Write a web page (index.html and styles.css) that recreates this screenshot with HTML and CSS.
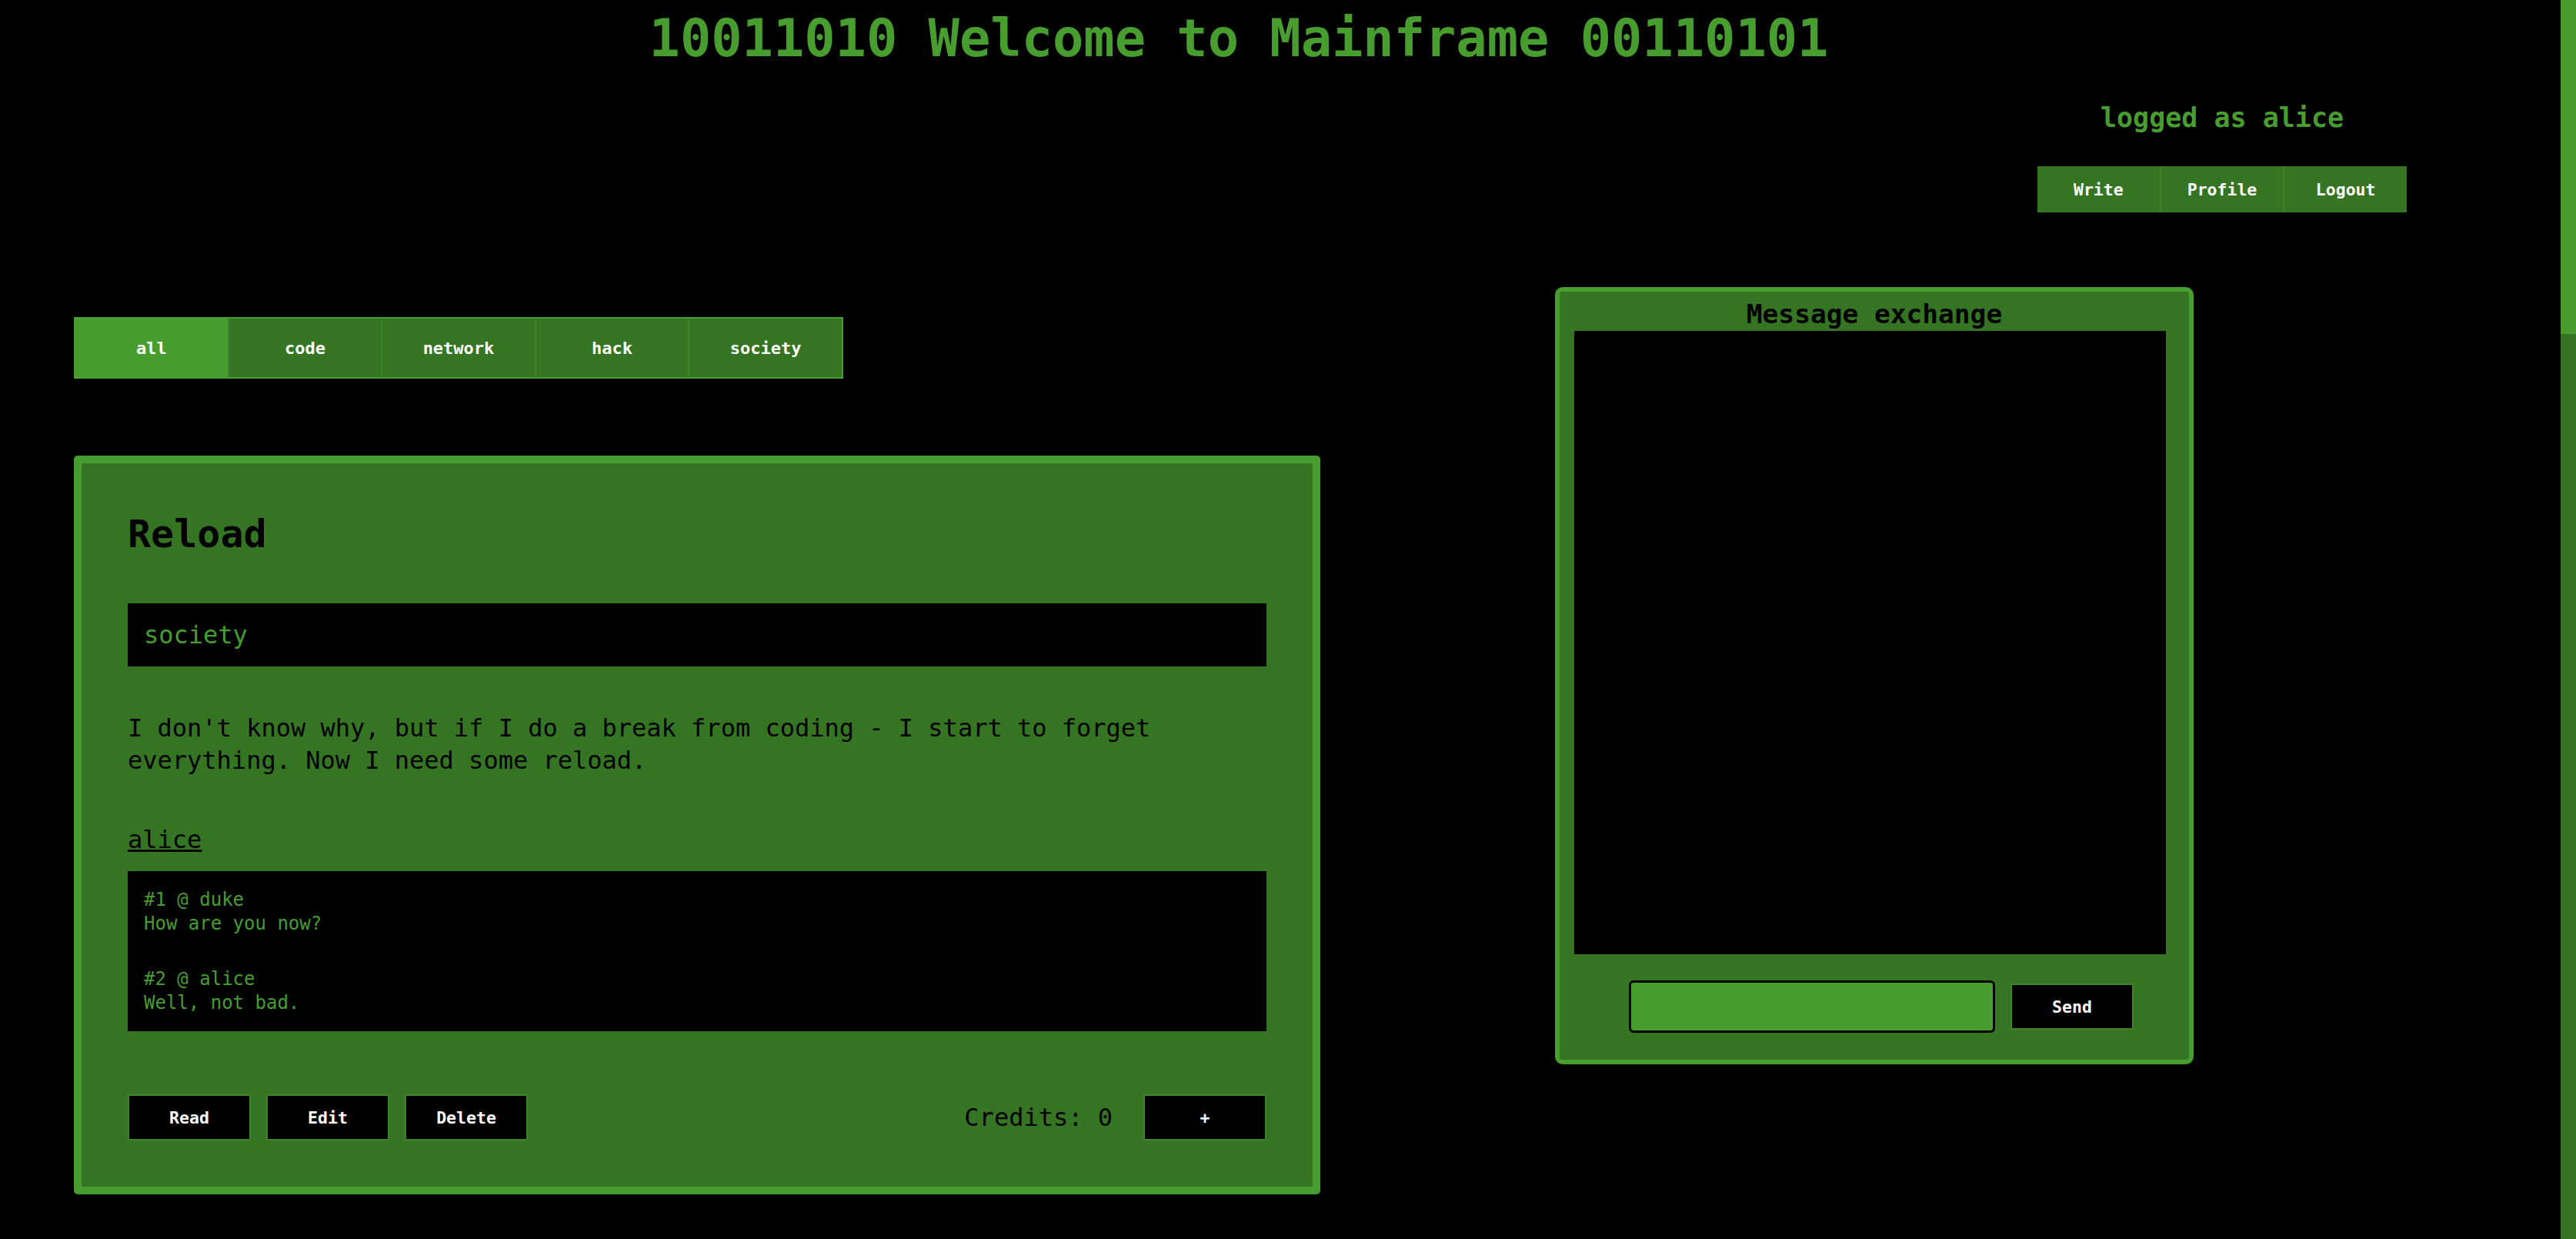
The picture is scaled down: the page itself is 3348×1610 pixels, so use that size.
FILE: index.html
```html
<!DOCTYPE html>
<html lang="en">
<head>
<meta charset="utf-8">
<title>Mainframe</title>
<link rel="stylesheet" href="styles.css">
</head>
<body>
<header class="top">
  <h1 class="title">10011010 Welcome to Mainframe 00110101</h1>
  <div class="user">
    <p class="who">logged as alice</p>
    <nav class="menu">
      <button class="menu-btn">Write</button>
      <button class="menu-btn">Profile</button>
      <button class="menu-btn">Logout</button>
    </nav>
  </div>
</header>
<main class="layout">
  <section class="feed">
    <nav class="tabs">
      <button class="tab active">all</button>
      <button class="tab">code</button>
      <button class="tab">network</button>
      <button class="tab">hack</button>
      <button class="tab">society</button>
    </nav>
    <article class="post">
      <h2 class="post-title">Reload</h2>
      <div class="post-tag">society</div>
      <p class="post-text">I don't know why, but if I do a break from coding - I start to forget everything. Now I need some reload.</p>
      <p class="post-author"><a class="author-link" href="#">alice</a></p>
      <div class="comments">
        <p class="comment">#1 @ duke<br>How are you now?</p>
        <p class="comment">#2 @ alice<br>Well, not bad.</p>
      </div>
      <div class="post-actions">
        <div class="action-group">
          <button class="btn">Read</button>
          <button class="btn">Edit</button>
          <button class="btn">Delete</button>
        </div>
        <span class="credits">Credits: 0</span>
        <button class="btn">+</button>
      </div>
    </article>
  </section>
  <aside class="chat">
    <h3 class="chat-title">Message exchange</h3>
    <div class="chat-screen"></div>
    <form class="chat-form">
      <input class="chat-input" type="text">
      <button class="btn" type="button">Send</button>
    </form>
  </aside>
</main>
<div class="scrollbar" aria-hidden="true"><div class="scrollbar-thumb"></div></div>
</body>
</html>
```

FILE: styles.css
```css
:root {
  --dark: #357423;
  --light: #479d2e;
  --sep: #3c8429;
}

html {
  background: #000;
}

body {
  margin: 0;
  background: #000;
  color: #000;
  font-family: "DejaVu Sans Mono", "Liberation Mono", monospace;
}

/* decorative scrollbar overlay */
.scrollbar {
  position: fixed;
  top: 0;
  right: 0;
  width: 20px;
  height: 100vh;
  background: #357425;
}

.scrollbar-thumb {
  height: 434px;
  background: #4a9c2f;
}

/* header */
.top {
  padding-top: 12px;
}

.title {
  margin: 0;
  padding-right: 128px;
  text-align: center;
  font-size: 67px;
  line-height: 77px;
  font-weight: bold;
  color: var(--light);
}

.user {
  width: 480px;
  margin: 44px 220px 0 auto;
}

.who {
  margin: 0;
  text-align: center;
  font-size: 35px;
  line-height: 41px;
  font-weight: bold;
  color: var(--light);
}

.menu {
  display: flex;
  height: 60px;
  margin-top: 42px;
}

.menu-btn {
  flex: 1;
  border: 0;
  border-left: 2px solid var(--sep);
  background: var(--dark);
  color: #fff;
  font: bold 21.5px "DejaVu Sans Mono", monospace;
  padding: 0;
}

.menu-btn:first-child {
  border-left: 0;
}

/* layout */
.layout {
  display: flex;
  align-items: flex-start;
  gap: 305px;
  margin-top: 97px;
  padding-left: 96px;
}

.feed {
  width: 1620px;
  padding-top: 39px;
}

.tabs {
  display: flex;
  width: 1000px;
  height: 80px;
  box-sizing: border-box;
  border: 2px solid var(--light);
  background: var(--dark);
}

.tab {
  flex: 1;
  border: 0;
  border-left: 2px solid var(--sep);
  background: var(--dark);
  color: #fff;
  font: bold 22px "DejaVu Sans Mono", monospace;
  padding: 0;
}

.tab:first-child {
  border-left: 0;
}

.tab.active {
  background: var(--light);
}

/* post */
.post {
  margin-top: 100px;
  box-sizing: border-box;
  width: 1620px;
  padding: 60px;
  border: 10px solid var(--light);
  border-radius: 5px;
  background: var(--dark);
}

.post-title {
  margin: 3px 0 0;
  font-size: 50px;
  line-height: 58px;
  font-weight: bold;
}

.post-tag {
  margin-top: 61px;
  height: 82px;
  line-height: 82px;
  padding-left: 21px;
  background: #000;
  color: var(--light);
  font-size: 32px;
}

.post-text {
  margin: 59px 0 0;
  font-size: 32px;
  line-height: 42px;
}

.post-author {
  margin: 61px 0 0;
  font-size: 32px;
  line-height: 42px;
}

.author-link {
  color: #000;
  text-decoration: underline;
}

.comments {
  margin-top: 20px;
  padding: 22px 21px 21px;
  background: #000;
  color: var(--light);
  font-size: 24px;
  line-height: 31px;
}

.comment {
  margin: 0;
}

.comment + .comment {
  margin-top: 41px;
}

.post-actions {
  display: flex;
  align-items: center;
  height: 60px;
  margin-top: 82px;
}

.action-group {
  display: flex;
  gap: 20px;
}

.btn {
  width: 160px;
  height: 60px;
  box-sizing: border-box;
  border: 2px solid var(--sep);
  background: #000;
  color: #fff;
  font: bold 21.5px "DejaVu Sans Mono", monospace;
  padding: 0;
}

.credits {
  margin-left: auto;
  margin-right: 40px;
  font-size: 32px;
  line-height: 37px;
}

/* chat */
.chat {
  width: 830px;
  height: 1010px;
  box-sizing: border-box;
  padding-top: 9px;
  border: 6px solid var(--light);
  border-radius: 10px;
  background: var(--dark);
}

.chat-title {
  margin: 0;
  text-align: center;
  font-size: 34.5px;
  line-height: 40px;
  font-weight: bold;
}

.chat-screen {
  width: 769px;
  height: 810px;
  margin: 2px 0 0 19px;
  background: #000;
}

.chat-form {
  display: flex;
  align-items: center;
  gap: 20px;
  margin: 34px 0 0;
  padding-left: 90px;
}

.chat-input {
  width: 476px;
  height: 68px;
  box-sizing: border-box;
  margin: 0;
  border: 3px solid #000;
  border-radius: 6px;
  background: var(--light);
  font: 24px "DejaVu Sans Mono", monospace;
}
```
